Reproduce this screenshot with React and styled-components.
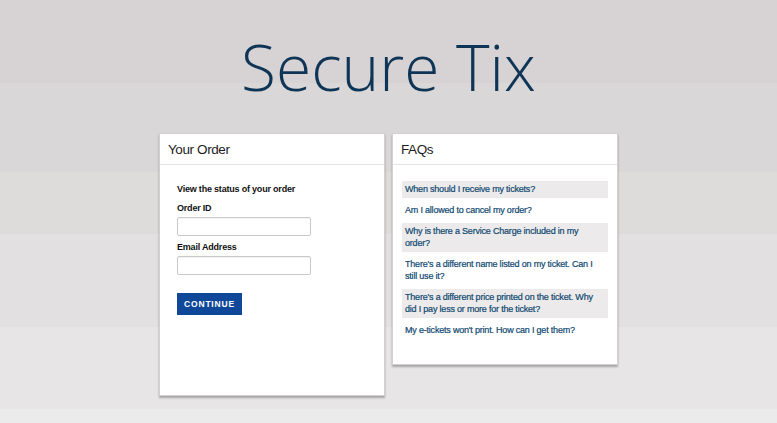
import React from "react";
import styled, { createGlobalStyle } from "styled-components";

const Global = createGlobalStyle`
  html, body { margin: 0; padding: 0; }
  body {
    font-family: "Liberation Sans", Arial, sans-serif;
    background: linear-gradient(to bottom,
      #d7d3d4 0px, #d7d3d4 83px,
      #d9d7d7 83px, #d9d7d7 172px,
      #dedbdb 172px, #dedbdb 234px,
      #e2e0e0 234px, #e2e0e0 327px,
      #e7e5e6 327px, #e7e5e6 409px,
      #ecebeb 409px, #ecebeb 100%);
    min-height: 423px;
  }
`;

const Page = styled.div`
  width: 777px;
  height: 423px;
  overflow: hidden;
`;

const Title = styled.h1`
  margin: 0;
  padding-top: 25px;
  height: 133px;
  box-sizing: border-box;
  text-align: center;
  font-family: "Open Sans", sans-serif;
  font-weight: 300;
  font-size: 64px;
  line-height: 84px;
  color: #0f3556;
  letter-spacing: 0;
`;

const Cards = styled.div`
  display: flex;
  justify-content: center;
  align-items: flex-start;
  gap: 7px;
`;

const Card = styled.section`
  width: 226px;
  box-sizing: border-box;
  height: ${(p) => (p.$h ? `${p.$h}px` : "auto")};
  background: #fff;
  border: 1px solid #d2d0d0;
  box-shadow: 0 2px 2px rgba(0, 0, 0, 0.28);
  display: flex;
  flex-direction: column;
`;

const CardHeader = styled.header`
  height: 30px;
  border-bottom: 1px solid #e4e4e4;
  display: flex;
  align-items: center;
  padding-left: 8px;
  font-size: 13.5px;
  letter-spacing: -0.4px;
  color: #1c1c1c;
`;

const FormBody = styled.div`
  padding: 18px 17px 0 17px;
  display: flex;
  flex-direction: column;
  align-items: flex-start;
`;

const Heading = styled.div`
  font-size: 9px;
  font-weight: bold;
  letter-spacing: -0.2px;
  line-height: 12px;
  color: #111;
  margin-bottom: 7px;
`;

const Label = styled.label`
  font-size: 9px;
  font-weight: bold;
  letter-spacing: -0.2px;
  line-height: 12px;
  color: #111;
  margin-top: ${(p) => p.$mt || 0}px;
  margin-bottom: 3px;
`;

const Input = styled.input`
  width: 134px;
  height: 19px;
  box-sizing: border-box;
  border: 1px solid #c9c9c9;
  border-radius: 2px;
  background: #fff;
  padding: 0 4px;
  margin: 0;
  box-shadow: inset 0 1px 1px rgba(0, 0, 0, 0.05);
`;

const Button = styled.button`
  margin-top: 18px;
  width: 65px;
  height: 22px;
  border: none;
  background: #0f4799;
  color: #fff;
  font-family: "Liberation Sans", Arial, sans-serif;
  font-size: 8.5px;
  font-weight: bold;
  letter-spacing: 0.8px;
  padding: 0;
  cursor: pointer;
`;

const FaqList = styled.ul`
  list-style: none;
  margin: 0;
  padding: 16px 9px 25px 9px;
  display: flex;
  flex-direction: column;
  gap: 4px;
`;

const FaqItem = styled.li`
  background: ${(p) => (p.$shaded ? "#ecEAEA" : "transparent")};
  padding: 2px 3px 3px 3px;
  font-size: 9px;
  letter-spacing: -0.2px;
  line-height: 12px;
  color: #0e4770;
  -webkit-text-stroke: 0.2px #0e4770;
`;

const faqs = [
  "When should I receive my tickets?",
  "Am I allowed to cancel my order?",
  "Why is there a Service Charge included in my order?",
  "There's a different name listed on my ticket. Can I still use it?",
  "There's a different price printed on the ticket. Why did I pay less or more for the ticket?",
  "My e-tickets won't print. How can I get them?",
];

export default function App() {
  return (
    <Page>
      <Global />
      <Title>Secure Tix</Title>
      <Cards>
        <Card $h={263}>
          <CardHeader>Your Order</CardHeader>
          <FormBody>
            <Heading>View the status of your order</Heading>
            <Label>Order ID</Label>
            <Input type="text" />
            <Label $mt={5}>Email Address</Label>
            <Input type="text" />
            <Button>CONTINUE</Button>
          </FormBody>
        </Card>
        <Card>
          <CardHeader>FAQs</CardHeader>
          <FaqList>
            {faqs.map((q, i) => (
              <FaqItem key={q} $shaded={i % 2 === 0}>
                {q}
              </FaqItem>
            ))}
          </FaqList>
        </Card>
      </Cards>
    </Page>
  );
}
